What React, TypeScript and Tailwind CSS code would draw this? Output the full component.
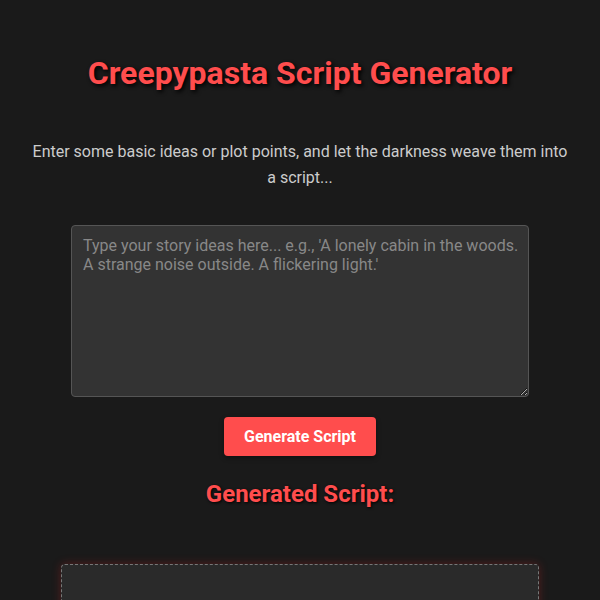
import React, { useState } from 'react';

const App = () => {
  const [ideas, setIdeas] = useState('');

  return (
    <div className="min-h-screen bg-[#1a1a1a] font-['Roboto',sans-serif] text-[#cccccc]">
      <div className="mx-auto flex w-[600px] flex-col items-center pt-[54px]">
        <h1 className="text-[32px] font-bold leading-[38px] text-[#ff4d4d] [text-shadow:2px_2px_4px_#000]">
          Creepypasta Script Generator
        </h1>
        <p className="mt-[47px] w-[540px] text-center text-[16px] leading-[26px] text-[#cccccc]">
          Enter some basic ideas or plot points, and let the darkness weave them into a script...
        </p>
        <textarea
          value={ideas}
          onChange={(e) => setIdeas(e.target.value)}
          placeholder="Type your story ideas here... e.g., 'A lonely cabin in the woods. A strange noise outside. A flickering light.'"
          className="mt-[34px] h-[172px] w-[458px] resize-y rounded-[4px] border border-[#555555] bg-[#333333] pl-[11px] pr-[4px] pt-[10px] pb-[8px] text-[16px] leading-[19px] text-[#e0e0e0] placeholder:text-[#888888] focus:outline-none"
        />
        <button
          type="button"
          className="mt-[20px] h-[39px] w-[152px] rounded-[4px] bg-[#ff4d4d] text-[16px] font-bold text-white shadow-[0_2px_5px_rgba(0,0,0,0.4)]"
        >
          Generate Script
        </button>
        <h2 className="mt-[24px] text-[24px] font-bold leading-[28px] text-[#ff4d4d] [text-shadow:1px_1px_3px_#000]">
          Generated Script:
        </h2>
        <div className="mt-[56px] h-[200px] w-[478px] rounded-[4px] border border-dashed border-[#777777] bg-[#2a2a2a] shadow-[0_0_10px_rgba(255,40,40,0.25)]" />
      </div>
    </div>
  );
};

export default App;
